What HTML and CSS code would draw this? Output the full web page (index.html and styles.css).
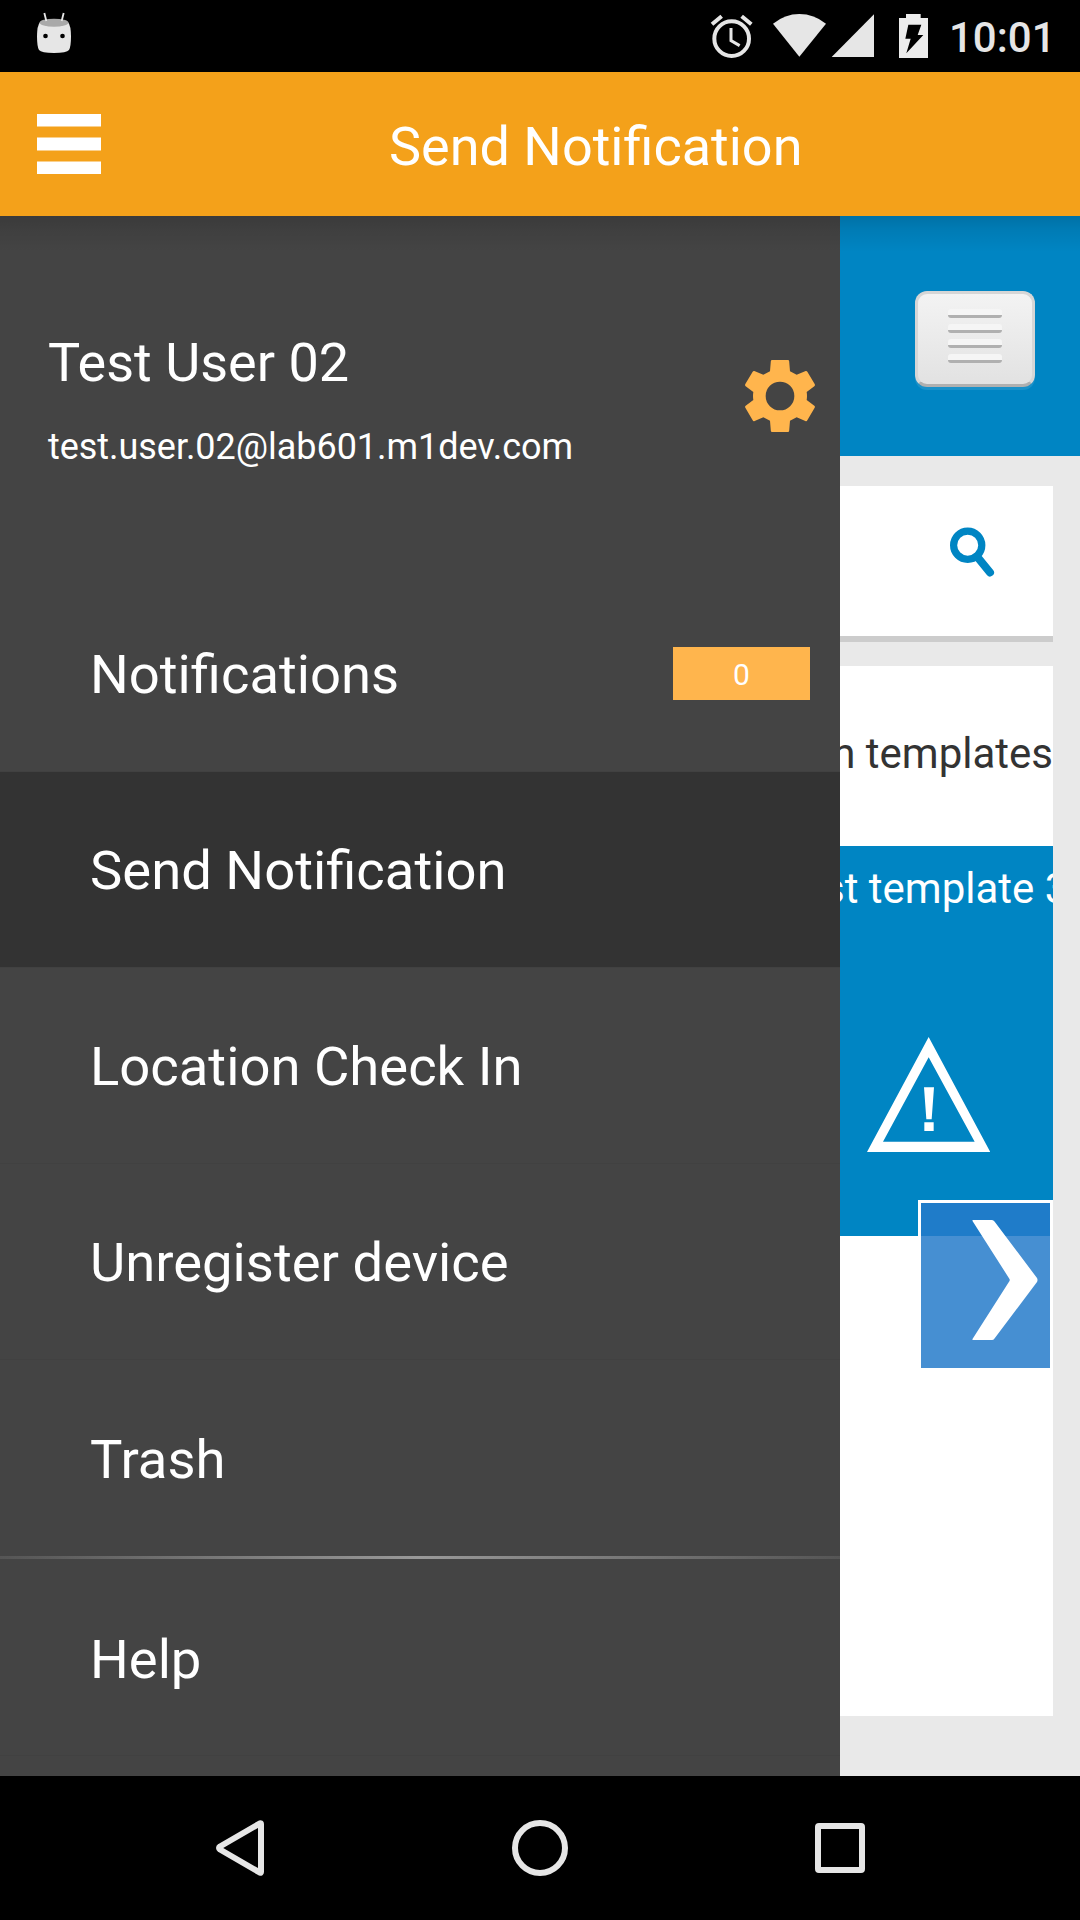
FILE: index.html
```html
<!DOCTYPE html>
<html lang="en">
<head>
<meta charset="utf-8">
<title>Send Notification</title>
<link rel="stylesheet" href="styles.css">
</head>
<body>
<div class="screen">
  <div class="status">
    <svg class="droid" viewBox="108 0 108 216">
      <path d="M120 66Q111 78 111 108Q111 140 117 150Q124 159 162 159Q200 159 207 150Q213 140 213 108Q213 78 204 66Z" fill="#e6e6e6"/>
      <ellipse cx="162" cy="68" rx="43" ry="12" fill="#a9a9a9"/>
      <path d="M133 39L139 63M191 39L185 63" stroke="#e6e6e6" stroke-width="5.5" fill="none"/>
      <circle cx="136.500" cy="108" r="7"/><circle cx="187.500" cy="108" r="7"/>
    </svg>
    <svg class="alarm" viewBox="60 0 129 216" fill="none" stroke="#e6e6e6">
      <circle cx="125" cy="116" r="52" stroke-width="12"/>
      <path d="M66 73L95 49M184 73L155 49" stroke-width="12"/>
      <path d="M123 84V122L149 137" stroke-width="9"/>
    </svg>
    <svg class="wifi" viewBox="249 0 159 216"><path d="M249 71Q285 42 328 42Q372 42 408 71L328 170Z" fill="#e6e6e6"/></svg>
    <svg class="signal" viewBox="423 0 129 216"><path d="M425 171H552V43Z" fill="#e6e6e6"/></svg>
    <svg class="battery" viewBox="627 0 87 216"><path d="M627 54H648V42H692V54H714V174H627Z" fill="#ececec"/><path d="M655 74H694L683 105H700L649 160L662 116H646Z" fill="#000"/></svg>
    <span class="clock">10:01</span>
  </div>
  <header class="appbar">
    <svg class="burger" viewBox="0 0 64 60" fill="#fff"><path d="M0 0H64V12.400H0ZM0 23.600H64V36.400H0ZM0 47.600H64V60H0Z"/></svg>
    <h1 class="title">Send Notification</h1>
  </header>
  <main class="main">
    <nav class="drawer">
      <div class="profile">
        <div class="who">
          <div class="name">Test User 02</div>
          <div class="email">test.user.02@lab601.m1dev.com</div>
        </div>
        <svg class="gear" viewBox="75 450 210 216"><path fill="#ffb54d" fill-rule="evenodd" d="M156 450H204Q207 450 207.500 454L210 484L230 494L257 483Q260 482 262 485L284 522Q286 526 283 529L260 546Q262 558 260 570L283 587Q286 590 284 593L262 631Q260 635 256 633L230 622L210 632L207.500 662Q207 666 204 666H156Q153 666 152.500 662L150 632L130 622L104 633Q100 635 98 631L76 593Q74 590 77 587L100 570Q98 558 100 546L77 529Q74 526 76 522L98 485Q100 482 103 483L130 494L150 484L152.500 454Q153 450 156 450ZM180 515A43 43 0 1 0 180 601A43 43 0 1 0 180 515Z"/></svg>
      </div>
      <div class="item"><span>Notifications</span><span class="badge">0</span></div>
      <div class="item active"><span>Send Notification</span></div>
      <div class="item"><span>Location Check In</span></div>
      <div class="item"><span>Unregister device</span></div>
      <div class="item last"><span>Trash</span></div>
      <div class="divider"></div>
      <div class="item help"><span>Help</span></div>
    </nav>
    <section class="content">
      <div class="toolbar">
        <div class="listbtn"><i></i><i></i><i></i><i></i></div>
      </div>
      <div class="search">
        <svg class="lens" viewBox="0 0 46 52" fill="none" stroke="#0085c3"><circle cx="18.700" cy="18.200" r="14.100" stroke-width="7.200"/><path d="M28 29.500L41 45.500" stroke-width="8" stroke-linecap="round"/></svg>
      </div>
      <div class="card">
        <div class="heading">n templates</div>
        <div class="tile">
          <div class="tilename">st template 3</div>
          <svg class="warn" viewBox="141 110 369 345" fill="#fff"><path fill-rule="evenodd" d="M326 110L511 455H141ZM326 171L189 424H464Z"/><path d="M312 261H342L335 357H319ZM313 366H341V392H313Z"/></svg>
        </div>
        <div class="next"><svg class="chevron" viewBox="0 0 66 120"><path fill="#fff" d="M1 0H20Q21.500 0 22.500 1.500L65 58Q66 60 65 62L22.500 118.500Q21.500 120 20 120H1Q0 120 .5 119L37.500 61Q38 60 37.500 59L.5 1Q0 0 1 0Z"/></svg></div>
      </div>
    </section>
    <div class="shade"></div>
  </main>
  <footer class="navbar">
    <svg viewBox="0 0 60 60"><path d="M10 28.500Q8 30 10 31.500L50 54.700Q51 55 51 54V6Q51 5 50 5.300Z"/></svg>
    <svg viewBox="0 0 60 60"><circle cx="30" cy="30" r="25"/></svg>
    <svg viewBox="0 0 60 60"><rect x="8" y="8" width="44" height="44" rx="1"/></svg>
  </footer>
</div>
</body>
</html>
```
FILE: styles.css
```css
* { box-sizing: border-box; }
body { margin: 0; background: #000; font-family: Roboto, "Liberation Sans", sans-serif; color: #fff; }
svg { display: block; flex: none; }
.screen { width: 1080px; height: 1920px; display: flex; flex-direction: column; overflow: hidden; }

.status { height: 72px; background: #000; display: flex; padding-left: 36px; }
.status svg { height: 72px; }
.droid { width: 36px; }
.alarm { width: 43px; margin-left: 638px; }
.wifi { width: 53px; margin-left: 20px; }
.signal { width: 43px; margin-left: 5px; }
.battery { width: 29px; margin-left: 25px; }
.clock { margin-left: 21px; font-size: 42px; line-height: 76px; font-weight: 500; color: #e6e6e6; }

.appbar { height: 144px; background: #f4a11a; display: flex; align-items: center; padding-left: 37px; }
.burger { width: 64px; height: 60px; }
.title { margin: 0 0 0 288px; font-size: 54px; font-weight: 400; line-height: 144px; padding-top: 6px; white-space: nowrap; }

.main { height: 1560px; display: flex; position: relative; }
.shade { position: absolute; left: 0; right: 0; top: 0; height: 36px; background: linear-gradient(rgba(0,0,0,.15), rgba(0,0,0,.07) 40%, rgba(0,0,0,0)); }

.drawer { width: 840px; background: #444; flex: none; }
.profile { height: 360px; display: flex; justify-content: space-between; padding: 114px 25px 0 48px; }
.name { font-size: 54px; line-height: 64px; padding-top: 1px; }
.email { font-size: 36px; line-height: 44px; margin-top: 30px; letter-spacing: -.04px; }
.gear { width: 70px; height: 72px; margin-top: 30px; }
.item { height: 196px; border-bottom: 1px solid #414141; padding: 2px 30px 0 90px; display: flex; align-items: center; justify-content: space-between; font-size: 54.4px; }
.item.active { background: #333; }
.item.last { border-bottom: 0; }
.item.help { padding-top: 4px; }
.badge { width: 137px; height: 53px; margin-top: -2px; background: #ffb54d; font-size: 30px; line-height: 55px; text-align: center; }
.divider { height: 4px; border-bottom: 1px solid #444; background: linear-gradient(90deg, #555, #999 50%, #555); }

.content { width: 240px; background: #e9e9e9; overflow: hidden; }
.toolbar { height: 240px; background: #0085c3; padding: 75px 45px 0 75px; }
.listbtn { width: 120px; height: 96px; border-radius: 12px; border: 3px solid #d6d6d6; border-bottom-color: #b0b0b0; background: linear-gradient(#f3f3f3, #e2e2e2); box-shadow: 0 3px 0 rgba(255,255,255,.1); display: flex; flex-direction: column; align-items: center; gap: 6px; padding-top: 15px; }
.listbtn i { width: 54px; height: 9px; border-radius: 3px; background: linear-gradient(#f5f5f5 6px, #b0b0b0 6px); }
.search { width: 213px; height: 156px; margin-top: 30px; background: #fff; border-bottom: 6px solid #ccc; padding: 41px 0 0 109px; }
.lens { width: 46px; height: 52px; }
.card { width: 213px; height: 1050px; margin-top: 24px; background: #fff; position: relative; overflow: hidden; }
.heading { height: 180px; display: flex; justify-content: flex-end; font-size: 42px; line-height: 176px; color: #333; white-space: nowrap; }
.tile { height: 390px; background: #0085c3; overflow: hidden; }
.tilename { margin-left: -17px; padding-top: 18px; font-size: 42px; line-height: 50px; white-space: nowrap; }
.warn { width: 123px; height: 115px; margin: 123px 0 0 27px; }
/* scroll button floats over the tile's lower edge */
.next { position: absolute; right: 0; top: 534px; width: 135px; height: 171px; border: 3px solid #fff; background: rgba(37,123,202,.847); background-clip: padding-box; padding: 17px 0 0 51px; }
.chevron { width: 66px; height: 120px; }

.navbar { height: 144px; background: #000; display: flex; justify-content: center; align-items: center; gap: 240px; }
.navbar svg { width: 60px; height: 60px; fill: none; stroke: #e6e6e6; stroke-width: 6; stroke-linejoin: round; }
```
